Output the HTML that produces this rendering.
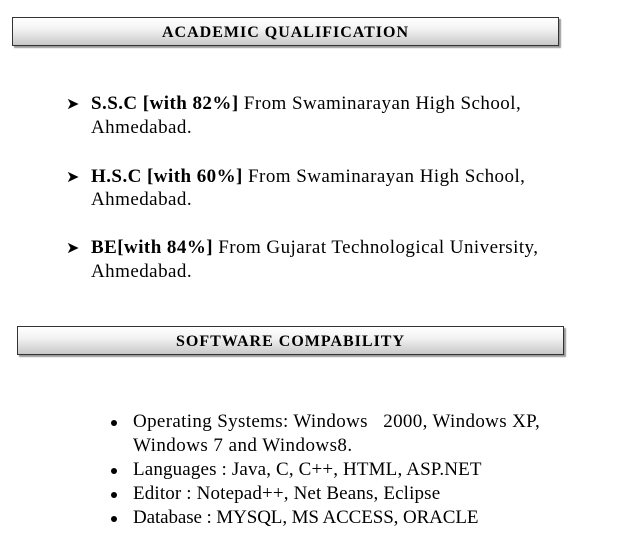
<!DOCTYPE html>
<html><head><style>
body{margin:0;width:619px;height:553px;background:#fff;position:relative;overflow:hidden;font-family:"Liberation Serif",serif;color:#000}
.box{position:absolute;height:27px;border:1px solid #333;background:linear-gradient(#fff,#f3f3f3 40%,#c8c8c8);box-shadow:2px 2px 1px #999;text-align:center;font-weight:bold;font-size:16px;line-height:29px;letter-spacing:1px}
.l{position:absolute;font-size:19px;letter-spacing:0.45px;white-space:nowrap;line-height:24px}
.m{letter-spacing:0.15px}
.a{position:absolute;font-size:16px}
.d{position:absolute;width:6px;height:6px;border-radius:50%;background:#000}
</style></head><body>
<div class="box" style="left:12px;top:17px;width:545px">ACADEMIC QUALIFICATION</div>
<div class="box" style="left:17px;top:326px;width:545px">SOFTWARE COMPABILITY</div>

<div class="a" style="left:66px;top:94px">&#10148;</div>
<div class="l" style="left:91px;top:92px"><b>S.S.C [with 82%]</b> From Swaminarayan High School,</div>
<div class="l" style="left:91px;top:116px">Ahmedabad.</div>
<div class="a" style="left:66px;top:167px">&#10148;</div>
<div class="l" style="left:91px;top:165px"><b>H.S.C [with 60%]</b> From Swaminarayan High School,</div>
<div class="l" style="left:91px;top:188px">Ahmedabad.</div>
<div class="a" style="left:66px;top:238px">&#10148;</div>
<div class="l" style="left:91px;top:236px"><b>BE[with 84%]</b> From Gujarat Technological University,</div>
<div class="l" style="left:91px;top:260px">Ahmedabad.</div>

<div class="d" style="left:111px;top:420px"></div>
<div class="l" style="left:133px;top:410px;letter-spacing:0.35px">Operating Systems: Windows &nbsp; 2000, Windows XP,</div>
<div class="l" style="left:133px;top:434px">Windows 7 and Windows8.</div>
<div class="d" style="left:111px;top:468px"></div>
<div class="l m" style="left:133px;top:458px">Languages : Java, C, C++, HTML, ASP.NET</div>
<div class="d" style="left:111px;top:492px"></div>
<div class="l m" style="left:133px;top:482px">Editor : Notepad++, Net Beans, Eclipse</div>
<div class="d" style="left:111px;top:516px"></div>
<div class="l" style="left:133px;top:506px;letter-spacing:-0.1px">Database : MYSQL, MS ACCESS, ORACLE</div>
</body></html>
